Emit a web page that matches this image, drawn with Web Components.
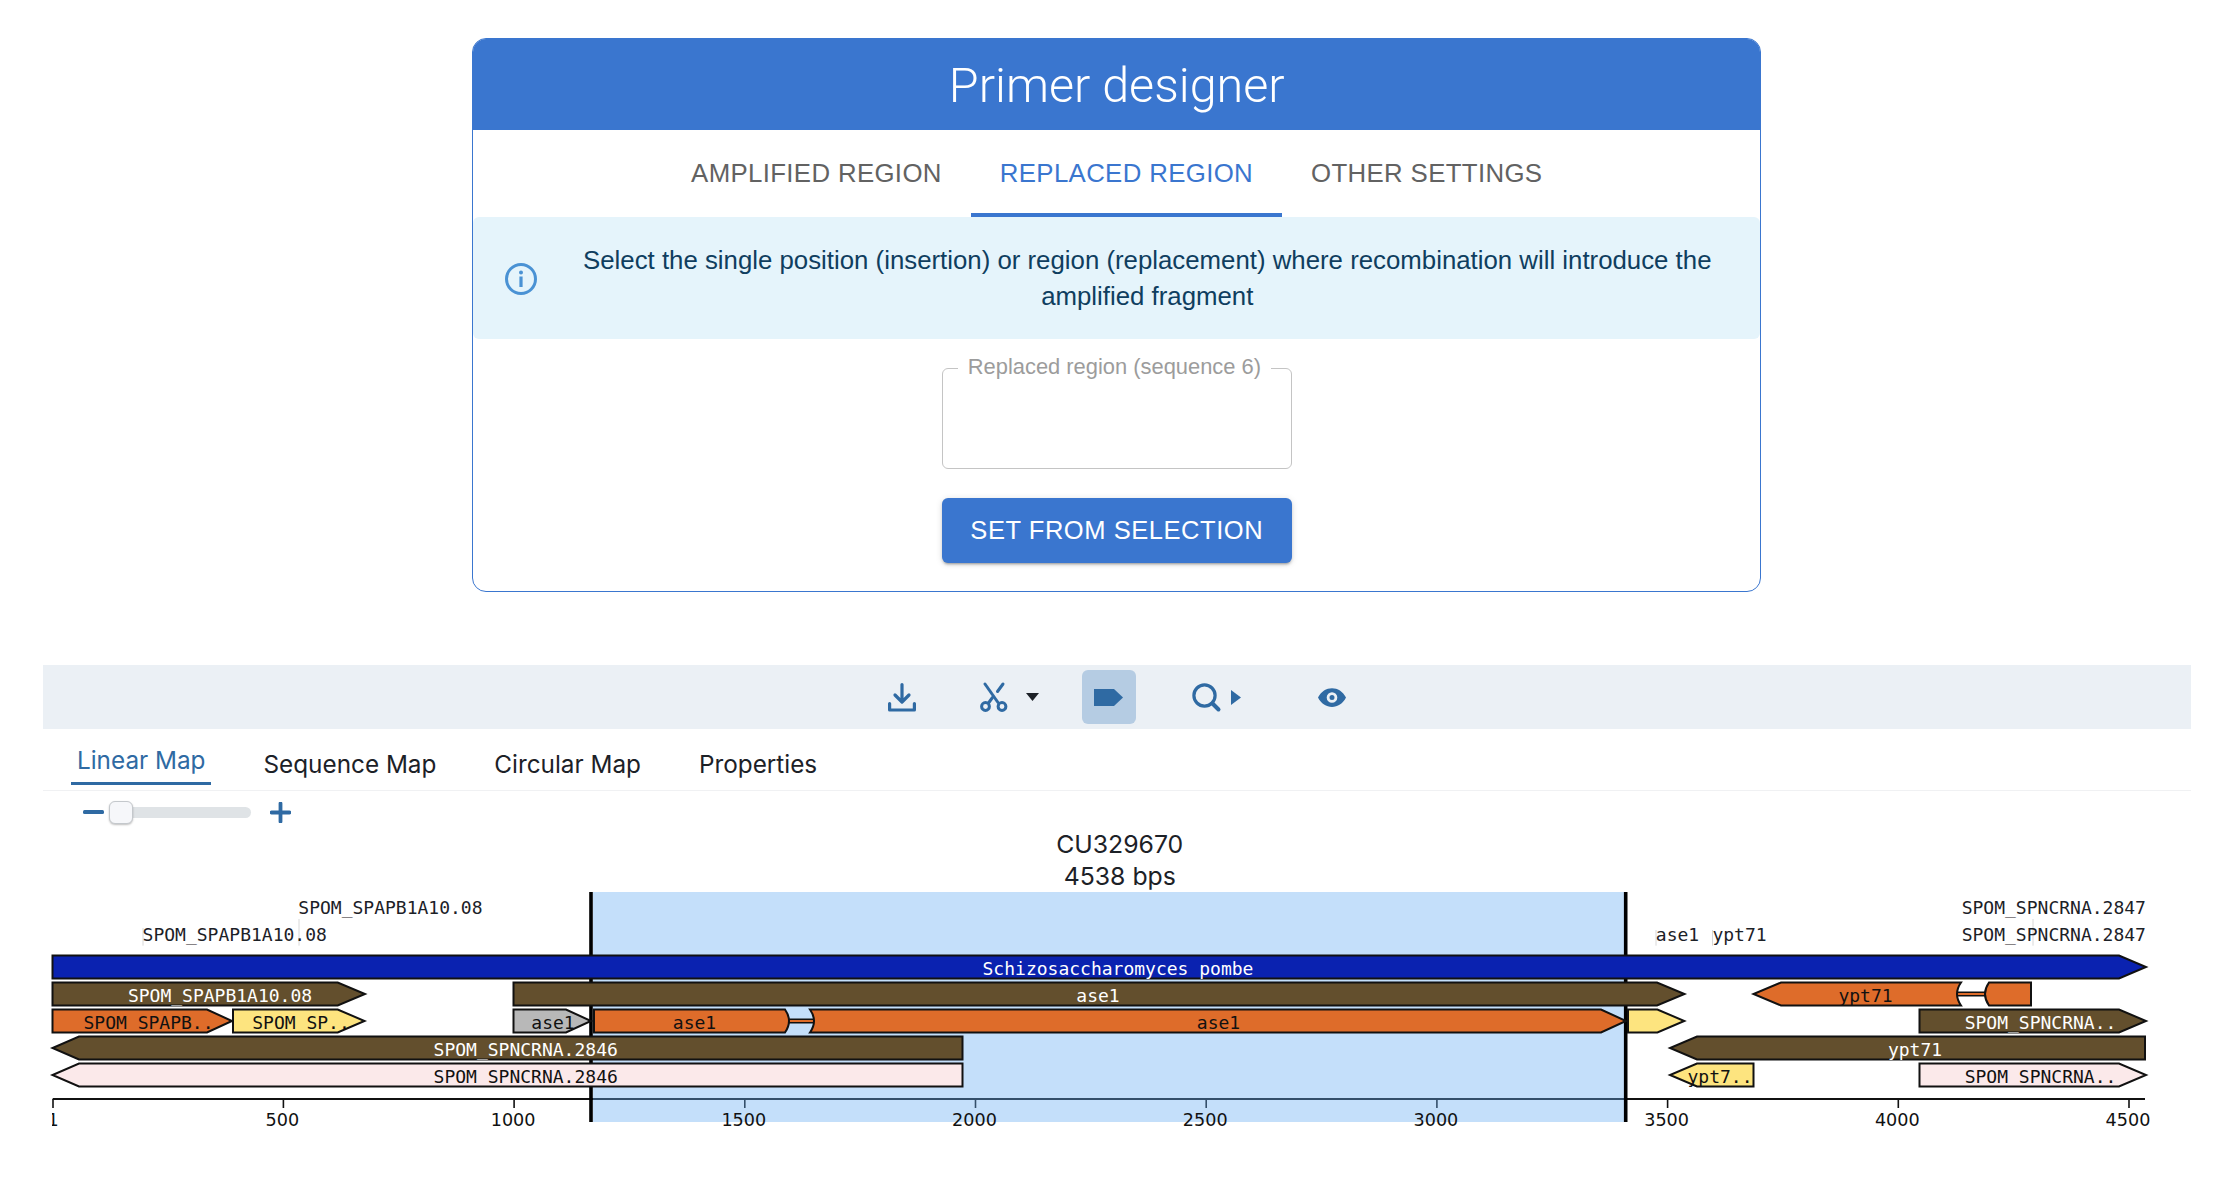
<!DOCTYPE html>
<html lang="en">
<head>
<meta charset="utf-8">
<title>Primer designer</title>
<style>
    html, body { margin: 0; padding: 0; background: #fff; }
    body { font-family: "Liberation Sans", Arial, sans-serif; }
    #page { padding: 38px 33px 0 42.5px; }
</style>
</head>
<body>
<div id="page">
    <primer-card>
        <span slot="title">Primer designer</span>
        <primer-tab slot="tabs">AMPLIFIED REGION</primer-tab>
        <primer-tab slot="tabs" active>REPLACED REGION</primer-tab>
        <primer-tab slot="tabs">OTHER SETTINGS</primer-tab>
        <info-alert slot="alert">Select the single position (insertion) or region (replacement) where recombination will introduce the amplified fragment</info-alert>
        <region-field label="Replaced region (sequence 6)"></region-field>
        <action-button>SET FROM SELECTION</action-button>
    </primer-card>
    <seq-toolbar></seq-toolbar>
    <map-tabs>
        <map-tab active>Linear Map</map-tab>
        <map-tab>Sequence Map</map-tab>
        <map-tab>Circular Map</map-tab>
        <map-tab>Properties</map-tab>
    </map-tabs>
    <zoom-slider></zoom-slider>
    <map-title>
        <span>CU329670</span>
        <span>4538 bps</span>
    </map-title>
    <feature-map></feature-map>
</div>

<script>
function makeTemplate(html) {
    const t = document.createElement('template');
    t.innerHTML = html;
    return t;
}

class SimpleElement extends HTMLElement {
    constructor() {
        super();
        this.attachShadow({ mode: 'open' });
        this.shadowRoot.appendChild(this.constructor.template.content.cloneNode(true));
    }
}

class PrimerCard extends SimpleElement {
    static template = makeTemplate(`
<style>
    :host { display: block; width: 1289px; margin: 0 auto; box-sizing: border-box; border: 1px solid #3a76cf; border-radius: 14px; height: 554px; overflow: hidden; }
    header { height: 91px; background: #3a76cf; color: #fff; font-family: Roboto, "Liberation Sans", sans-serif; font-size: 48.5px; font-weight: 300; text-align: center; line-height: 93px; }
    nav { display: flex; justify-content: center; height: 87px; }
    main { display: flex; flex-direction: column; align-items: center; }
</style>
<header><slot name="title"></slot></header>
<nav><slot name="tabs"></slot></nav>
<slot name="alert"></slot>
<main><slot></slot></main>
`);
}

class PrimerTab extends SimpleElement {
    static template = makeTemplate(`
<style>
    :host { display: block; box-sizing: border-box; height: 87px; padding: 0 29px; line-height: 86px; font-size: 25.8px; letter-spacing: 0.35px; color: #626262; border-bottom: 4px solid transparent; white-space: nowrap; }
    :host([active]) { color: #3a76cf; border-bottom-color: #3a76cf; }
</style>
<slot></slot>
`);
}

class InfoAlert extends SimpleElement {
    static template = makeTemplate(`
<style>
    :host { display: flex; align-items: center; box-sizing: border-box; height: 122px; background: #e5f4fb; border-radius: 6px; color: #0f3e5f; font-size: 25.8px; line-height: 36.5px; padding: 0 24px 0 31px; }
    svg { flex: none; width: 34px; height: 34px; margin-top: 2px; }
    div { flex: 1; margin-left: 20px; text-align: center; }
</style>
<svg viewBox="0 0 34 34"><circle cx="17" cy="17" r="14.5" fill="none" stroke="#4a92d4" stroke-width="3"/><circle cx="17" cy="10.5" r="2" fill="#4a92d4"/><rect x="15.4" y="14.5" width="3.2" height="10.5" fill="#4a92d4"/></svg>
<div><slot></slot></div>
`);
}

class RegionField extends SimpleElement {
    static template = makeTemplate(`
<style>
    :host { display: block; position: relative; box-sizing: border-box; width: 350px; height: 101px; margin-top: 29px; border: 1px solid #c4c4c4; border-radius: 6px; }
    label { position: absolute; left: 15px; top: -14px; padding: 0 10px; background: #fff; font-size: 21.9px; line-height: 24px; color: #9c9c9c; white-space: nowrap; }
</style>
<label></label>
`);
    connectedCallback() {
        this.shadowRoot.querySelector('label').textContent = this.getAttribute('label');
    }
}

class ActionButton extends SimpleElement {
    static template = makeTemplate(`
<style>
    :host { display: block; box-sizing: border-box; width: 350px; height: 65px; margin-top: 29px; background: #3a76cf; color: #fff; border-radius: 6px; font-size: 25.5px; letter-spacing: 0.55px; line-height: 64px; text-align: center; box-shadow: 0 3px 2px -2px rgba(0,0,0,.2), 0 2px 3px 0 rgba(0,0,0,.14), 0 1px 7px 0 rgba(0,0,0,.12); }
</style>
<slot></slot>
`);
}

class SeqToolbar extends SimpleElement {
    static template = makeTemplate(`
<style>
    :host { display: flex; align-items: center; justify-content: center; height: 64px; margin-top: 73px; background: #ebf0f5; }
    .item { display: flex; align-items: center; justify-content: center; height: 54px; flex: none; }
    .on { background: #b5cce3; border-radius: 6px; }
    svg { display: block; overflow: visible; }
</style>
<div class="item" style="width:54px">
    <svg width="28" height="29" viewBox="0 0 28 29" fill="none" stroke="#2f6aa3" stroke-width="3.2" stroke-linecap="round" stroke-linejoin="round"><path d="M14 1.5V18.5M7 12L14 19L21 12"/><path d="M1.6 20.5V27H26.4V20.5"/></svg>
</div>
<div class="item" style="width:90px;margin-left:35px;justify-content:flex-start;padding-left:15px;box-sizing:border-box">
    <svg width="29" height="29" viewBox="0 0 29 29" fill="none" stroke="#2f6aa3" stroke-width="3" stroke-linecap="round"><path d="M6 1L19 19.5"/><path d="M24 1L18.5 8.5"/><path d="M13.5 14.5L9.5 20"/><circle cx="6.5" cy="23.5" r="3.9"/><circle cx="23" cy="23.5" r="3.9"/></svg>
    <svg width="13" height="8" viewBox="0 0 13 8" style="margin-left:18px"><path d="M0 0H13L6.5 8Z" fill="#1c2127"/></svg>
</div>
<div class="item on" style="width:54px;margin-left:28px">
    <svg width="29" height="17" viewBox="0 0 29 17"><path d="M0 0H20L29 8.5L20 17H0Z" fill="#2f6aa3"/></svg>
</div>
<div class="item" style="width:72px;margin-left:44px;justify-content:flex-start;padding-left:12px;box-sizing:border-box">
    <svg width="29" height="29" viewBox="0 0 29 29" fill="none" stroke="#2f6aa3" stroke-width="3.2" stroke-linecap="round"><circle cx="12.5" cy="12.5" r="10.6"/><path d="M20.5 20.5L26.5 26.5" stroke-width="4"/></svg>
    <svg width="10" height="15" viewBox="0 0 10 15" style="margin-left:10px"><path d="M0 0L10 7.5L0 15Z" fill="#2f6aa3"/></svg>
</div>
<div class="item" style="width:54px;margin-left:53px">
    <svg width="28" height="19" viewBox="0 0 28 19"><path fill="#2f6aa3" fill-rule="evenodd" d="M0 9.5C6-3 22-3 28 9.5C22 22 6 22 0 9.5ZM14 4.2A5.3 5.3 0 1 0 14 14.8A5.3 5.3 0 1 0 14 4.2ZM14 7A2.5 2.5 0 1 1 14 12A2.5 2.5 0 1 1 14 7Z"/></svg>
</div>
`);
}

class MapTabs extends SimpleElement {
    static template = makeTemplate(`
<style>
    :host { display: flex; height: 62px; box-sizing: border-box; padding-left: 28.5px; gap: 58px; border-bottom: 1px solid #f0f1f3; }
</style>
<slot></slot>
`);
}

class MapTab extends SimpleElement {
    static template = makeTemplate(`
<style>
    :host { display: block; box-sizing: border-box; height: 61px; line-height: 70px; color: #1c2127; font-family: Inter, "Liberation Sans", sans-serif; font-size: 24.3px; white-space: nowrap; }
    :host([active]) { margin-right: -6px; padding: 0 6px; color: #2f6aa3; line-height: 63px; height: 56px; border-bottom: 3px solid #2f6aa3; }
</style>
<slot></slot>
`);
}

class ZoomSlider extends SimpleElement {
    static template = makeTemplate(`
<style>
    :host { display: flex; align-items: center; height: 42px; box-sizing: border-box; padding-left: 40.5px; }
    .bar { flex: none; }
    .track { position: relative; width: 141px; height: 11px; margin-left: 6px; background: #dfe3e6; border-radius: 6px; }
    .thumb { position: absolute; left: -1px; top: -6px; width: 24px; height: 23px; box-sizing: border-box; background: #f6f7fa; border: 1px solid #c4c8cc; border-radius: 6px; box-shadow: 0 1px 2px rgba(0,0,0,.25); }
</style>
<svg class="bar" width="21" height="4"><rect width="21" height="4" rx="1.5" fill="#2f6aa3"/></svg>
<div class="track"><div class="thumb"></div></div>
<svg class="bar" width="21" height="21" style="margin-left:19px"><path d="M8.6 1.5a1.9 1.9 0 0 1 3.8 0V8.6H19.5a1.9 1.9 0 0 1 0 3.8H12.4V19.5a1.9 1.9 0 0 1-3.8 0V12.4H1.5a1.9 1.9 0 0 1 0-3.8H8.6Z" fill="#2f6aa3"/></svg>
`);
}

class MapTitle extends SimpleElement {
    static template = makeTemplate(`
<style>
    :host { display: flex; flex-direction: column; align-items: center; box-sizing: border-box; height: 53px; margin-left: 6px; margin-top: -5px; margin-bottom: 5px; font-family: Inter, "Liberation Sans", sans-serif; font-size: 24.8px; line-height: 32px; color: #1c2127; }
</style>
<slot></slot>
`);
}

// positions are page pixels, the svg viewBox starts at the page offset of this element
const ROW = i => 955.5 + 27 * i;
const H = 23;
const BROWN = '#634f2d', ORANGE = '#de6c2a', YELLOW = '#fde47f', PINK = '#fbe9ea', GREY = '#b8b8b8', BLUE = '#0a22b0';

function right(x0, head, tip, r) { const y = ROW(r); return `M${x0} ${y}H${head}L${tip} ${y + H / 2}L${head} ${y + H}H${x0}Z`; }
function left(x1, head, tip, r) { const y = ROW(r); return `M${x1} ${y}H${head}L${tip} ${y + H / 2}L${head} ${y + H}H${x1}Z`; }

const SHAPES = [
    [right(52.5, 2119, 2146, 0), BLUE],
    [right(52.5, 337.7, 365, 1), BROWN],
    [right(513.5, 1657, 1684.5, 1), BROWN],
    [`M1961 ${ROW(1)}H1781L1753.5 ${ROW(1) + H / 2}L1781 ${ROW(1) + H}H1961Q1953 ${ROW(1) + H / 2} 1961 ${ROW(1)}Z`, ORANGE],
    [`M1989 ${ROW(1)}H2031V${ROW(1) + H}H1989Q1981 ${ROW(1) + H / 2} 1989 ${ROW(1)}Z`, ORANGE],
    [right(52.5, 207, 232, 2), ORANGE],
    [right(233, 337.7, 364.5, 2), YELLOW],
    [right(513.5, 566, 591, 2), GREY],
    [`M594 ${ROW(2)}H785Q793 ${ROW(2) + H / 2} 785 ${ROW(2) + H}H594Z`, ORANGE],
    [`M810 ${ROW(2)}Q818 ${ROW(2) + H / 2} 810 ${ROW(2) + H}H1601L1626 ${ROW(2) + H / 2}L1601 ${ROW(2)}Z`, ORANGE],
    [right(1628, 1657.4, 1684.3, 2), YELLOW],
    [right(1919.5, 2119, 2146, 2), BROWN],
    [left(962.5, 79, 52.5, 3), BROWN],
    [left(2145, 1697, 1670, 3), BROWN],
    [left(962.5, 79, 52.5, 4), PINK],
    [left(1753.5, 1697, 1670, 4), YELLOW],
    [right(1919.5, 2119, 2146, 4), PINK],
];

const INTRONS = [[789, 814, 2], [1957, 1985, 1]];

const BAR_TEXT = [
    ['Schizosaccharomyces pombe', 1118, 0, '#fff'],
    ['SPOM_SPAPB1A10.08', 220, 1, '#fff'],
    ['ase1', 1098, 1, '#fff'],
    ['ypt71', 1865.5, 1, '#111'],
    ['SPOM_SPAPB..', 148.5, 2, '#111'],
    ['SPOM_SP..', 301, 2, '#111'],
    ['ase1', 553, 2, '#111'],
    ['ase1', 694.5, 2, '#111'],
    ['ase1', 1218.5, 2, '#111'],
    ['SPOM_SPNCRNA..', 2040.5, 2, '#fff'],
    ['SPOM_SPNCRNA.2846', 525.7, 3, '#fff'],
    ['ypt71', 1915, 3, '#fff'],
    ['SPOM_SPNCRNA.2846', 525.7, 4, '#111'],
    ['ypt7..', 1720, 4, '#111'],
    ['SPOM_SPNCRNA..', 2040.5, 4, '#111'],
];

const LABELS = [
    ['SPOM_SPAPB1A10.08', 298.3, 914, 919, 299],
    ['SPOM_SPAPB1A10.08', 142.6, 941, 928, 143],
    ['ase1', 1655.8, 941, 930, 1656],
    ['ypt71', 1712.4, 941, 930, 1712.5],
    ['SPOM_SPNCRNA.2847', 1961.7, 914, null, 0],
    ['SPOM_SPNCRNA.2847', 1961.7, 941, 919, 2033],
];

class FeatureMap extends SimpleElement {
    static template = makeTemplate(`
<style>
    :host { display: block; height: 250px; margin-left: -0.5px; }
    svg { display: block; width: 2149px; height: 250px; }
    text { font-family: "DejaVu Sans Mono", monospace; font-size: 18px; }
    .tick { font-family: "DejaVu Sans", sans-serif; font-size: 17.6px; text-anchor: middle; fill: #111; }
</style>
<svg viewBox="42 886 2149 250"></svg>
`);

    connectedCallback() {
        let out = '<defs><clipPath id="axisclip"><rect x="52" y="1100" width="2140" height="40"/></clipPath></defs>';
        for (const [text, x, y, lineTop, lineX] of LABELS) {
            if (lineTop) out += `<path d="M${lineX} ${lineTop}V945.7" stroke="#d8d8d8" stroke-width="1"/>`;
            out += `<text x="${x}" y="${y}" fill="#1c2127">${text}</text>`;
        }
        // axis
        out += '<path d="M52.7 1099H2145" stroke="#111" stroke-width="2"/>';
        const ticks = [1, 500, 1000, 1500, 2000, 2500, 3000, 3500, 4000, 4500];
        for (const t of ticks) {
            const x = t === 1 ? 53 : 52.7 + 0.4614 * t;
            out += `<path d="M${x} 1099V1108" stroke="#111" stroke-width="1.6"/>`;
        }
        // selection goes over the axis but under the features
        out += '<rect x="593" y="892" width="1031" height="230" fill="#6aaff3" fill-opacity="0.395"/>';
        out += '<path d="M591 892V1122M1625.7 892V1122" stroke="#000" stroke-width="3.6"/>';
        for (const t of ticks) {
            const x = t === 1 ? 53 : 52.7 + 0.4614 * t - 1;
            out += `<text class="tick" x="${x}" y="1126" ${t === 1 ? 'clip-path="url(#axisclip)"' : ''}>${t}</text>`;
        }
        for (const [x0, x1, r] of INTRONS) {
            const y = ROW(r) + H / 2;
            out += `<path d="M${x0} ${y}H${x1}" stroke="#111" stroke-width="5"/><path d="M${x0} ${y}H${x1}" stroke="${ORANGE}" stroke-width="2"/>`;
        }
        for (const [d, fill] of SHAPES) {
            out += `<path d="${d}" fill="${fill}" stroke="#111" stroke-width="2" stroke-linejoin="miter"/>`;
        }
        for (const [text, x, r, fill] of BAR_TEXT) {
            out += `<text x="${x}" y="${ROW(r) + 19.5}" text-anchor="middle" fill="${fill}">${text}</text>`;
        }
        this.shadowRoot.querySelector('svg').innerHTML = out;
    }
}

customElements.define('primer-card', PrimerCard);
customElements.define('primer-tab', PrimerTab);
customElements.define('info-alert', InfoAlert);
customElements.define('region-field', RegionField);
customElements.define('action-button', ActionButton);
customElements.define('seq-toolbar', SeqToolbar);
customElements.define('map-tabs', MapTabs);
customElements.define('map-tab', MapTab);
customElements.define('zoom-slider', ZoomSlider);
customElements.define('map-title', MapTitle);
customElements.define('feature-map', FeatureMap);
</script>
</body>
</html>
